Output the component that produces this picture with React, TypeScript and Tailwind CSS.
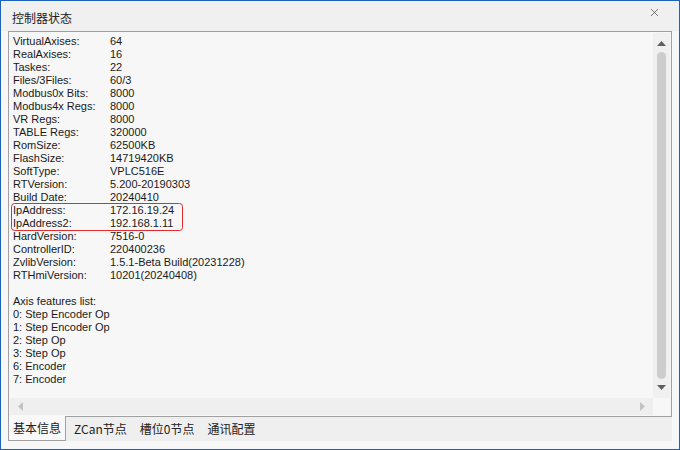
import { X } from "lucide-react"

const rows: [string, string][] = [
  ["VirtualAxises:", "64"],
  ["RealAxises:", "16"],
  ["Taskes:", "22"],
  ["Files/3Files:", "60/3"],
  ["Modbus0x Bits:", "8000"],
  ["Modbus4x Regs:", "8000"],
  ["VR Regs:", "8000"],
  ["TABLE Regs:", "320000"],
  ["RomSize:", "62500KB"],
  ["FlashSize:", "14719420KB"],
  ["SoftType:", "VPLC516E"],
  ["RTVersion:", "5.200-20190303"],
  ["Build Date:", "20240410"],
]

const ipRows: [string, string][] = [
  ["IpAddress:", "172.16.19.24"],
  ["IpAddress2:", "192.168.1.11"],
]

const moreRows: [string, string][] = [
  ["HardVersion:", "7516-0"],
  ["ControllerID:", "220400236"],
  ["ZvlibVersion:", "1.5.1-Beta Build(20231228)"],
  ["RTHmiVersion:", "10201(20240408)"],
]

const axes = [
  "0: Step Encoder Op",
  "1: Step Encoder Op",
  "2: Step Op",
  "3: Step Op",
  "6: Encoder",
  "7: Encoder",
]

const tabs = ["基本信息", "ZCan节点", "槽位0节点", "通讯配置"]

function Row({ label, value }: { label: string; value: string }) {
  return (
    <div className="flex h-[13px] items-center">
      <span className="w-[97px] shrink-0">{label}</span>
      <span>{value}</span>
    </div>
  )
}

export default function App() {
  return (
    <div
      className="flex h-[450px] w-[680px] flex-col border border-[#1b62b8] bg-[#f7f7f7] text-[#1a1a1a]"
      style={{ fontFamily: '"Liberation Sans", "Noto Sans CJK SC", sans-serif' }}
    >
      {/* title bar */}
      <div className="flex h-[30px] shrink-0 justify-between bg-[#f0f0f0] pl-[11px] pr-[18px]">
        <span
          className="pt-[8px] text-[12px] leading-[17px] text-[#222]"
          style={{ fontFamily: '"Noto Sans CJK SC", sans-serif' }}
        >
          控制器状态
        </span>
        <X className="mt-[5px] h-[13px] w-[13px] text-[#444]" strokeWidth={1.3} />
      </div>

      {/* info panel */}
      <div className="mx-[7px] flex h-[386px] shrink-0 flex-col border border-[#a0a0a0] bg-[#f7f7f7] p-px">
        <div className="flex min-h-0 flex-1">
          <div className="flex-1 pl-[3px] pt-[2px] text-[11px] leading-[13px]">
            {rows.map(([l, v]) => (
              <Row key={l} label={l} value={v} />
            ))}
            <div className="relative">
              <svg
                className="pointer-events-none absolute -left-[2px] -top-px"
                width="172"
                height="28"
                viewBox="0 0 172 28"
              >
                <rect x="0.5" y="0.5" width="171" height="27" rx="3" fill="none" stroke="#e52b2b" strokeWidth="1" />
              </svg>
              {ipRows.map(([l, v]) => (
                <Row key={l} label={l} value={v} />
              ))}
            </div>
            {moreRows.map(([l, v]) => (
              <Row key={l} label={l} value={v} />
            ))}
            <div className="h-[13px]" />
            <div className="flex h-[13px] items-center">Axis features list:</div>
            {axes.map((a) => (
              <div key={a} className="flex h-[13px] items-center">
                {a}
              </div>
            ))}
          </div>

          {/* vertical scrollbar */}
          <div className="flex w-[17px] shrink-0 flex-col items-center bg-[#f0f0f0]">
            <div className="flex h-[19px] w-full items-center justify-center pt-[2px]">
              <svg width="9" height="5" viewBox="0 0 9 5">
                <path d="M0 5 L4.5 0 L9 5 Z" fill="#606060" />
              </svg>
            </div>
            <div className="w-[9px] flex-1 rounded-full bg-[#cdcdcd]" />
            <div className="flex h-[19px] w-full items-center justify-center pb-[2px]">
              <svg width="9" height="5" viewBox="0 0 9 5">
                <path d="M0 0 L9 0 L4.5 5 Z" fill="#606060" />
              </svg>
            </div>
          </div>
        </div>

        {/* horizontal scrollbar */}
        <div className="flex h-[17px] shrink-0">
          <div className="flex flex-1 items-center justify-between bg-[#efefef] px-[8px]">
            <svg width="5" height="9" viewBox="0 0 5 9">
              <path d="M5 0 L0 4.5 L5 9 Z" fill="#c2c2c2" />
            </svg>
            <svg width="5" height="9" viewBox="0 0 5 9">
              <path d="M0 0 L5 4.5 L0 9 Z" fill="#c2c2c2" />
            </svg>
          </div>
          <div className="w-[17px] bg-[#f7f7f7]" />
        </div>
      </div>

      {/* tabs */}
      <div
        className="mx-[7px] flex h-[24px] shrink-0 bg-[#efefef] text-[12px] text-[#222]"
        style={{ fontFamily: '"Noto Sans CJK SC", sans-serif' }}
      >
        {tabs.map((t, i) => (
          <div
            key={t}
            className={
              i === 0
                ? "-mt-px flex h-[25px] items-center border-x border-b border-[#a0a0a0] bg-[#f9f9f9] px-[4px]"
                : i === 1
                  ? "ml-[2px] flex items-center px-[6px]"
                  : "ml-px flex items-center px-[6px]"
            }
          >
            {t}
          </div>
        ))}
      </div>
    </div>
  )
}
